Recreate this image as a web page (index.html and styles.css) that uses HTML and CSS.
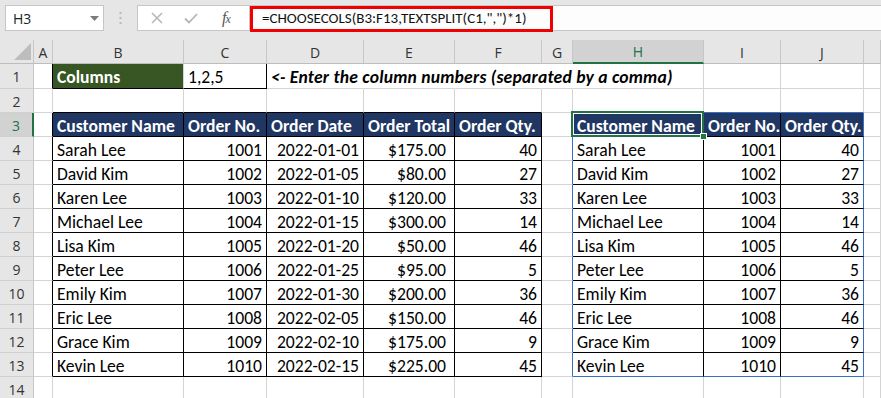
FILE: index.html
```html
<!DOCTYPE html>
<html>
<head>
<meta charset="utf-8">
<link rel="stylesheet" href="styles.css">
</head>
<body>
<div class="app">
  <div class="fbar">
    <div class="namebox"><span class="nbtext">H3</span>
      <svg class="dd" width="9" height="5" viewBox="0 0 9 5"><path d="M0 0H9L4.5 5Z" fill="#7a7a7a"/></svg>
    </div>
    <div class="grip">
      <svg width="3" height="12" viewBox="0 0 3 12"><rect x="0.5" y="0" width="2" height="2" fill="#b9b9b9"/><rect x="0.5" y="5" width="2" height="2" fill="#b9b9b9"/><rect x="0.5" y="10" width="2" height="2" fill="#b9b9b9"/></svg>
    </div>
    <div class="fxbox">
      <svg class="ic" width="12" height="12" viewBox="0 0 12 12"><path d="M1 1L11 11M11 1L1 11" stroke="#b5b5b5" stroke-width="1.5" fill="none"/></svg>
      <svg class="ic" width="14" height="11" viewBox="0 0 14 11"><path d="M1 5.5L5 9.5L13 1" stroke="#b5b5b5" stroke-width="1.8" fill="none"/></svg>
      <span class="fx">f<span class="fxx">x</span></span>
    </div>
    <div class="finput"><span class="formula">=CHOOSECOLS(B3:F13,TEXTSPLIT(C1,",")*1)</span></div>
  </div>

  <div class="sheet">
    <!-- column headers -->
    <div class="corner"><svg width="17" height="17" viewBox="0 0 17 17"><path d="M17 0V17H0Z" fill="#bdbdbd"/></svg></div>
    <div class="ch">A</div><div class="ch">B</div><div class="ch">C</div><div class="ch">D</div><div class="ch">E</div><div class="ch">F</div><div class="ch">G</div><div class="ch chsel">H</div><div class="ch">I</div><div class="ch">J</div><div class="ch"></div>

    <!-- row 1 -->
    <div class="rh">1</div>
    <div class="c bR"></div>
    <div class="c bB lbl">Columns</div>
    <div class="c bR bB">1,2,5</div>
    <div class="c nr note">&lt;- Enter the column numbers (separated by a comma)</div>
    <div class="c nr"></div><div class="c nr"></div><div class="c nr"></div>
    <div class="c"></div><div class="c"></div><div class="c"></div><div class="c"></div>

    <!-- row 2 -->
    <div class="rh">2</div>
    <div class="c"></div>
    <div class="c bB"></div><div class="c bB"></div><div class="c bB"></div><div class="c bB"></div><div class="c bB"></div>
    <div class="c"></div>
    <div class="c uB"></div><div class="c uB"></div><div class="c uB"></div>
    <div class="c"></div>

    <!-- row 3 -->
    <div class="rh rhsel">3</div>
    <div class="c bR"></div>
    <div class="c bR bB th">Customer Name</div>
    <div class="c bR bB th">Order No.</div>
    <div class="c bR bB th">Order Date</div>
    <div class="c bR bB th">Order Total</div>
    <div class="c bR bB th">Order Qty.</div>
    <div class="c uR"></div>
    <div class="c bR bB th active">Customer Name<span class="handle"></span></div>
    <div class="c bR bB th">Order No.</div>
    <div class="c uR bB th">Order Qty.</div>
    <div class="c"></div>

    <!-- row 4 -->
    <div class="rh">4</div>
    <div class="c bR"></div>
    <div class="c bR bB">Sarah Lee</div><div class="c bR bB r">1001</div><div class="c bR bB r">2022-01-01</div><div class="c bR bB r cur">$175.00</div><div class="c bR bB r">40</div>
    <div class="c uR"></div>
    <div class="c bR bB">Sarah Lee</div><div class="c bR bB r">1001</div><div class="c uR bB r">40</div>
    <div class="c"></div>

    <!-- row 5 -->
    <div class="rh">5</div>
    <div class="c bR"></div>
    <div class="c bR bB">David Kim</div><div class="c bR bB r">1002</div><div class="c bR bB r">2022-01-05</div><div class="c bR bB r cur">$80.00</div><div class="c bR bB r">27</div>
    <div class="c uR"></div>
    <div class="c bR bB">David Kim</div><div class="c bR bB r">1002</div><div class="c uR bB r">27</div>
    <div class="c"></div>

    <!-- row 6 -->
    <div class="rh">6</div>
    <div class="c bR"></div>
    <div class="c bR bB">Karen Lee</div><div class="c bR bB r">1003</div><div class="c bR bB r">2022-01-10</div><div class="c bR bB r cur">$120.00</div><div class="c bR bB r">33</div>
    <div class="c uR"></div>
    <div class="c bR bB">Karen Lee</div><div class="c bR bB r">1003</div><div class="c uR bB r">33</div>
    <div class="c"></div>

    <!-- row 7 -->
    <div class="rh">7</div>
    <div class="c bR"></div>
    <div class="c bR bB">Michael Lee</div><div class="c bR bB r">1004</div><div class="c bR bB r">2022-01-15</div><div class="c bR bB r cur">$300.00</div><div class="c bR bB r">14</div>
    <div class="c uR"></div>
    <div class="c bR bB">Michael Lee</div><div class="c bR bB r">1004</div><div class="c uR bB r">14</div>
    <div class="c"></div>

    <!-- row 8 -->
    <div class="rh">8</div>
    <div class="c bR"></div>
    <div class="c bR bB">Lisa Kim</div><div class="c bR bB r">1005</div><div class="c bR bB r">2022-01-20</div><div class="c bR bB r cur">$50.00</div><div class="c bR bB r">46</div>
    <div class="c uR"></div>
    <div class="c bR bB">Lisa Kim</div><div class="c bR bB r">1005</div><div class="c uR bB r">46</div>
    <div class="c"></div>

    <!-- row 9 -->
    <div class="rh">9</div>
    <div class="c bR"></div>
    <div class="c bR bB">Peter Lee</div><div class="c bR bB r">1006</div><div class="c bR bB r">2022-01-25</div><div class="c bR bB r cur">$95.00</div><div class="c bR bB r">5</div>
    <div class="c uR"></div>
    <div class="c bR bB">Peter Lee</div><div class="c bR bB r">1006</div><div class="c uR bB r">5</div>
    <div class="c"></div>

    <!-- row 10 -->
    <div class="rh">10</div>
    <div class="c bR"></div>
    <div class="c bR bB">Emily Kim</div><div class="c bR bB r">1007</div><div class="c bR bB r">2022-01-30</div><div class="c bR bB r cur">$200.00</div><div class="c bR bB r">36</div>
    <div class="c uR"></div>
    <div class="c bR bB">Emily Kim</div><div class="c bR bB r">1007</div><div class="c uR bB r">36</div>
    <div class="c"></div>

    <!-- row 11 -->
    <div class="rh">11</div>
    <div class="c bR"></div>
    <div class="c bR bB">Eric Lee</div><div class="c bR bB r">1008</div><div class="c bR bB r">2022-02-05</div><div class="c bR bB r cur">$150.00</div><div class="c bR bB r">46</div>
    <div class="c uR"></div>
    <div class="c bR bB">Eric Lee</div><div class="c bR bB r">1008</div><div class="c uR bB r">46</div>
    <div class="c"></div>

    <!-- row 12 -->
    <div class="rh">12</div>
    <div class="c bR"></div>
    <div class="c bR bB">Grace Kim</div><div class="c bR bB r">1009</div><div class="c bR bB r">2022-02-10</div><div class="c bR bB r cur">$175.00</div><div class="c bR bB r">9</div>
    <div class="c uR"></div>
    <div class="c bR bB">Grace Kim</div><div class="c bR bB r">1009</div><div class="c uR bB r">9</div>
    <div class="c"></div>

    <!-- row 13 -->
    <div class="rh">13</div>
    <div class="c bR"></div>
    <div class="c bR bB">Kevin Lee</div><div class="c bR bB r">1010</div><div class="c bR bB r">2022-02-15</div><div class="c bR bB r cur">$225.00</div><div class="c bR bB r">45</div>
    <div class="c uR"></div>
    <div class="c bR uB">Kevin Lee</div><div class="c bR uB r">1010</div><div class="c uR uB r">45</div>
    <div class="c"></div>

    <!-- row 14 -->
    <div class="rh">14</div>
    <div class="c"></div><div class="c"></div><div class="c"></div><div class="c"></div><div class="c"></div><div class="c"></div><div class="c"></div><div class="c"></div><div class="c"></div><div class="c"></div><div class="c"></div>
  </div>
</div>
</body>
</html>
```

FILE: styles.css
```css
* { box-sizing: border-box; }
html, body { margin: 0; padding: 0; background: #ffffff; }
.app { width: 881px; height: 398px; overflow: hidden; }

.fbar {
  height: 40px;
  background: #e6e6e6;
  display: flex;
  align-items: flex-start;
  padding: 5px 0 0 5px;
}
.namebox {
  width: 99px;
  height: 26px;
  background: #ffffff;
  border: 1px solid #c6c6c6;
  display: flex;
  align-items: center;
  justify-content: space-between;
  padding: 0 4px 0 7px;
  font-family: "Open Sans", "Noto Sans", sans-serif;
  font-size: 14px;
  color: #222;
}
.dd { margin-top: 1px; }
.grip {
  width: 33px;
  height: 26px;
  display: flex;
  align-items: center;
  justify-content: center;
}
.fxbox {
  width: 112px;
  height: 26px;
  background: #ffffff;
  border: 1px solid #c6c6c6;
  border-right: none;
  display: flex;
  align-items: center;
  padding-left: 13px;
}
.fxbox .ic:first-child { margin-right: 21px; }
.fxbox .ic { display: block; }
.fx {
  margin-left: 24px;
  font-family: "Liberation Serif", serif;
  font-style: italic;
  font-size: 16px;
  color: #555;
  letter-spacing: -1px;
}
.fxx { font-size: 12px; }
.finput {
  flex: 1;
  height: 26px;
  background: #fdfdfd;
  border: 1px solid #c6c6c6;
  border-right: none;
}
.formula {
  display: block;
  width: 303px;
  height: 26px;
  margin-top: 0;
  border: 3px solid #f00000;
  padding-left: 9px;
  font-family: "Carlito", "Calibri", "Lato", sans-serif;
  font-size: 15px;
  line-height: 19px;
  color: #111;
  white-space: nowrap;
}

.sheet {
  display: grid;
  grid-template-columns: 34px 19px 131px 83px 97px 91px 87px 31px 131px 77px 83px 1fr;
  grid-template-rows: 24px 25px repeat(13, 24px);
  font-family: "Carlito", "Calibri", "Lato", sans-serif;
  font-size: 17.6px;
  color: #000;
}
.corner {
  background: #e6e6e6;
  border-right: 1px solid #c6c6c6;
  border-bottom: 1px solid #bdbdbd;
  display: flex;
  align-items: flex-end;
  justify-content: flex-end;
  padding: 0 2px 3px 0;
}
.corner svg { display: block; }
.ch {
  background: #e6e6e6;
  border-right: 1px solid #c6c6c6;
  border-bottom: 1px solid #bdbdbd;
  font-family: "Open Sans", "Noto Sans", sans-serif;
  font-size: 14px;
  color: #333;
  display: flex;
  align-items: center;
  justify-content: center;
  padding-top: 1px;
}
.chsel {
  background: #d2d2d2;
  color: #217346;
  border-bottom: 2px solid #217346;
}
.rh {
  background: #e6e6e6;
  border-right: 1px solid #c6c6c6;
  border-bottom: 1px solid #d0d0d0;
  font-family: "Open Sans", "Noto Sans", sans-serif;
  font-size: 14px;
  color: #333;
  display: flex;
  align-items: center;
  justify-content: center;
  padding-top: 1px;
}
.rhsel {
  background: #d2d2d2;
  color: #217346;
  border-right: 2px solid #217346;
}

.c {
  border-right: 1px solid #d4d4d4;
  border-bottom: 1px solid #d4d4d4;
  padding: 3px 4px 0 4px;
  line-height: 20px;
  white-space: nowrap;
  overflow: visible;
}
.r { text-align: right; }
.cur { padding-right: 8px; }
.bR { border-right-color: #000; }
.bB { border-bottom-color: #000; }
.uR { border-right-color: #3a6fc6; }
.uB { border-bottom-color: #3a6fc6; }
.nr { border-right-color: transparent; }

.lbl {
  background: #375623;
  color: #fff;
  font-weight: bold;
}
.note {
  font-weight: bold;
  font-style: italic;
  letter-spacing: 0.22px;
  position: relative;
  z-index: 1;
}
.th {
  background: #203764;
  color: #fff;
  font-weight: bold;
}
.active { position: relative; }
.active::after {
  content: "";
  position: absolute;
  left: -2px;
  top: -2px;
  right: -1px;
  bottom: -1px;
  border: 2px solid #217346;
  box-shadow: inset 0 0 0 1px #ffffff;
  pointer-events: none;
}
.handle {
  position: absolute;
  right: -4px;
  bottom: -4px;
  width: 7px;
  height: 7px;
  background: #217346;
  border: 1px solid #ffffff;
  z-index: 2;
}
```
